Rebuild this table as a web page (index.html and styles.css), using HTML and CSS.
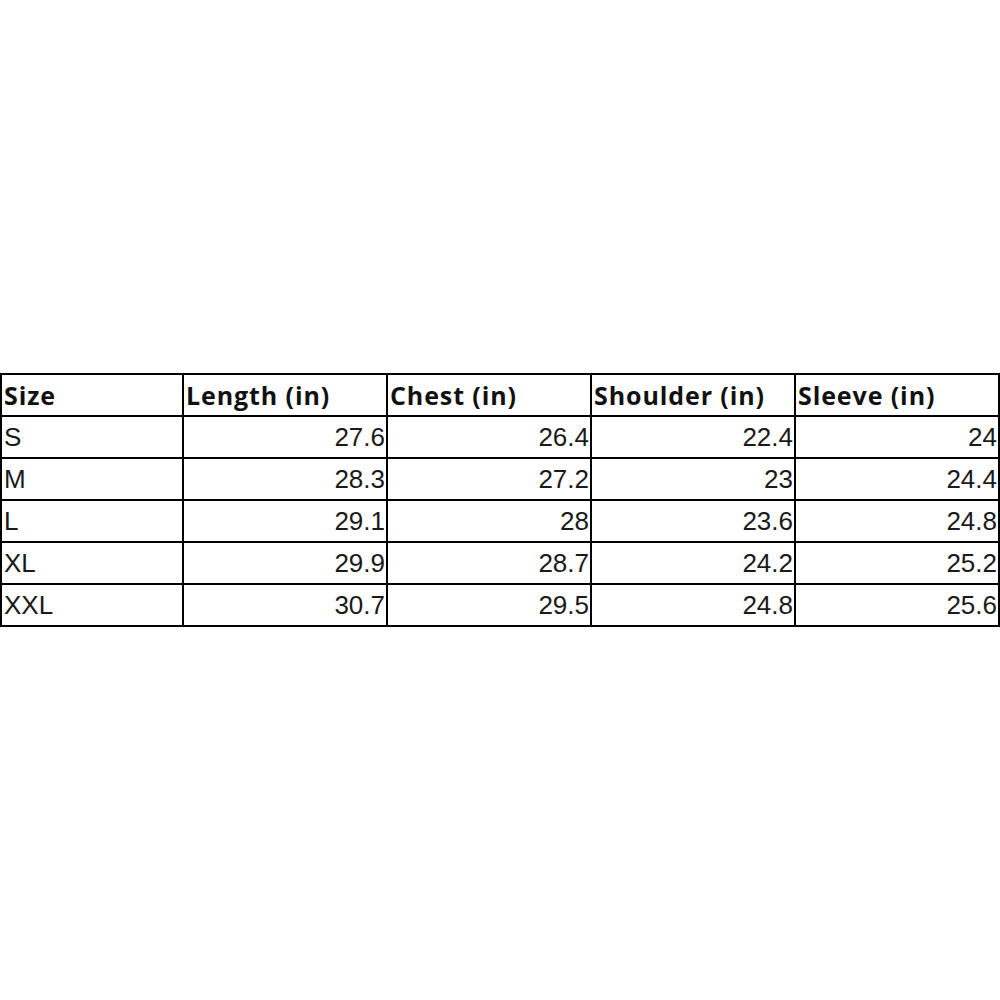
FILE: index.html
```html
<!DOCTYPE html>
<html>
<head>
<meta charset="utf-8">
<link rel="stylesheet" href="styles.css">
</head>
<body>
<div class="page">
<table class="size-table">
<colgroup>
<col class="c-first">
<col class="c-other">
<col class="c-other">
<col class="c-other">
<col class="c-other">
</colgroup>
<thead>
<tr><th>Size</th><th>Length (in)</th><th>Chest (in)</th><th>Shoulder (in)</th><th>Sleeve (in)</th></tr>
</thead>
<tbody>
<tr><td class="lbl">S</td><td>27.6</td><td>26.4</td><td>22.4</td><td>24</td></tr>
<tr><td class="lbl">M</td><td>28.3</td><td>27.2</td><td>23</td><td>24.4</td></tr>
<tr><td class="lbl">L</td><td>29.1</td><td>28</td><td>23.6</td><td>24.8</td></tr>
<tr><td class="lbl">XL</td><td>29.9</td><td>28.7</td><td>24.2</td><td>25.2</td></tr>
<tr><td class="lbl">XXL</td><td>30.7</td><td>29.5</td><td>24.8</td><td>25.6</td></tr>
</tbody>
</table>
</div>
</body>
</html>
```
FILE: styles.css
```css
html, body {
  margin: 0;
  padding: 0;
  background: #ffffff;
}
.page {
  height: 1000px;
  display: flex;
  align-items: center;
  justify-content: center;
}
.size-table {
  border-collapse: collapse;
  table-layout: fixed;
  width: 998px;
  color: #1a1a1a;
}
.c-first { width: 182px; }
.c-other { width: 204px; }
.size-table th,
.size-table td {
  border: 2px solid #000;
  height: 40px;
  padding: 0 1px 0 2px;
  line-height: 1;
  white-space: nowrap;
  overflow: hidden;
}
.size-table th {
  font-family: "Open Sans", "Noto Sans", sans-serif;
  font-size: 25px;
  letter-spacing: 0.9px;
  font-weight: 700;
  text-align: left;
  color: #111;
}
.size-table td {
  font-family: "Liberation Sans", Arial, sans-serif;
  font-size: 26px;
  font-weight: 400;
  text-align: right;
}
.size-table td.lbl {
  text-align: left;
}
```
